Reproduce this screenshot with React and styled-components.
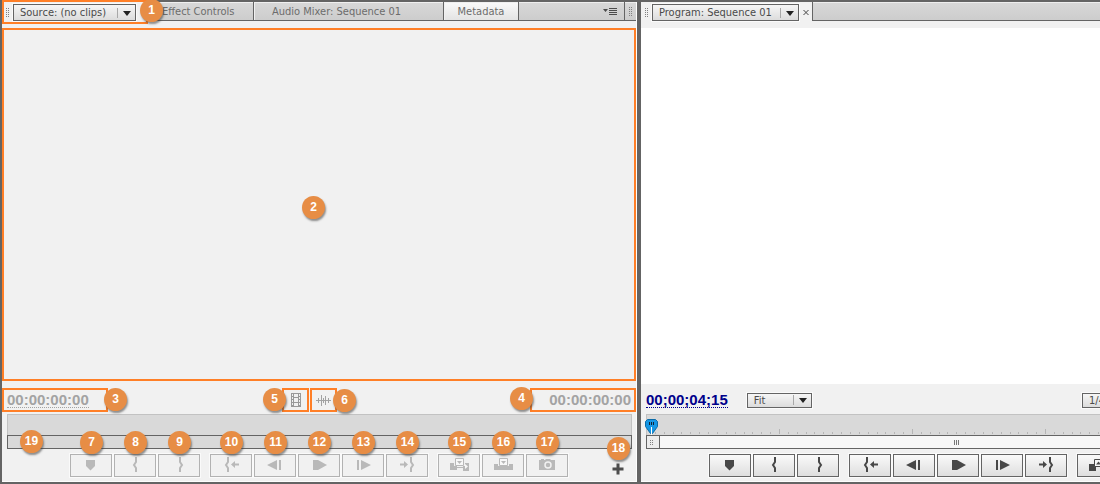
import React from "react";
import styled, { createGlobalStyle } from "styled-components";

const frame = "#646464";
const accent = "#ff7f27";

const GlobalStyle = createGlobalStyle`
  * {
    box-sizing: border-box;
  }

  body {
    margin: 0;
    background: ${frame};
    font-family: "DejaVu Sans Condensed", "DejaVu Sans", Tahoma, sans-serif;
    font-size: 11px;
    color: #4a4a4a;
  }

  button, select {
    font: inherit;
    color: inherit;
    margin: 0;
  }
`;

const Workspace = styled.main`
  display: grid;
  grid-template-columns: repeat(2, minmax(635px, 1fr));
  gap: 4px;
  height: 100vh;
  padding: 2px 0 2px 2px;
  overflow: hidden;
`;

const Panel = styled.section`
  display: flex;
  flex-direction: column;
  min-height: 0;
  background: #f1f1f1;
  border: 1px solid #fdfdfd;
  border-width: 0 1px 1px 0;
`;

const TabBar = styled.div`
  display: flex;
  flex: none;
  height: 19px;
  background: linear-gradient(#d8d8d8, #cccccc);
  box-shadow: inset 0 1px #eeeeee, inset 0 -1px ${frame};
`;

const ActiveTab = styled.div`
  position: relative;
  display: flex;
  align-items: center;
  gap: 4px;
  padding: 2px 0 0 4px;
  width: ${(p) => p.$width}px;
  background: #f1f1f1;
  border-right: ${(p) => (p.$outlined ? 0 : 1)}px solid ${frame};
`;

const Tab = styled.button`
  padding: 0 0 1px ${(p) => p.$indent || 0}px;
  width: ${(p) => p.$width}px;
  border: 0;
  border-right: 1px solid ${frame};
  background: ${(p) => (p.$lit ? "linear-gradient(#fafafa, #e2e2e2)" : "transparent")};
  box-shadow: inset 0 -1px ${frame}, inset 1px 1px #f0f0f0;
  color: #6c6c6c;
  text-align: ${(p) => (p.$lit ? "center" : "left")};
  white-space: nowrap;
`;

const MenuButton = styled.button`
  display: flex;
  align-items: center;
  margin-left: auto;
  padding: 0 6px 0 0;
  border: 0;
  border-right: 1px solid ${frame};
  background: none;
`;

const GripCell = styled.div`
  display: flex;
  align-items: center;
  padding: 0 4px;
`;

const CloseButton = styled.button`
  display: flex;
  padding: 0;
  border: 0;
  background: none;
`;

const SelectBox = styled.div`
  position: relative;
  flex: none;
  width: ${(p) => p.$width}px;
  height: ${(p) => p.$height || 17}px;

  select {
    appearance: none;
    display: block;
    width: 100%;
    height: 100%;
    padding: 0 0 0 6px;
    border: 1px solid ${frame};
    border-radius: 0;
    background: linear-gradient(#f6f6f6, #dcdcdc);
    box-shadow: 0 0 0 1px #fbfbfb;
  }

  svg {
    position: absolute;
    right: 5px;
    top: 50%;
    margin-top: -6px;
    pointer-events: none;
  }
`;

const Outline = styled.div`
  position: absolute;
  inset: ${(p) => p.$inset || "0"};
  border: 2px solid ${accent};
  pointer-events: none;
`;

const Screen = styled.div`
  position: relative;
  flex: 1;
  min-height: 0;
  margin-top: 7px;
  background: ${(p) => p.$color};
`;

const Badge = styled.span`
  position: absolute;
  z-index: 2;
  left: ${(p) => p.$left || "50%"};
  top: ${(p) => p.$top || "50%"};
  width: 23px;
  height: 23px;
  margin: -11px 0 0 -11px;
  border-radius: 50%;
  background: #e78d45;
  box-shadow: 1px 2px 2px rgba(60, 60, 60, 0.55);
  color: #fff;
  font: bold 12px/23px "Liberation Sans", Arial, sans-serif;
  text-align: center;
`;

const InfoRow = styled.div`
  display: flex;
  flex: none;
  align-items: center;
  height: 24px;
  margin-top: ${(p) => p.$top}px;
  padding: ${(p) => p.$padding || "0"};
`;

const TimeCell = styled.div`
  position: relative;
  display: flex;
  width: 106px;
  height: 24px;
  align-items: center;
  justify-content: ${(p) => (p.$end ? "flex-end" : "flex-start")};
  padding: 0 5px;
`;

const Timecode = styled.span`
  font: bold 15px/15px "Liberation Sans", Arial, sans-serif;
  color: ${(p) => (p.$live ? "#00008b" : "#a3a3a3")};
  border-bottom: 1px dotted ${(p) => (p.$plain ? "transparent" : "currentColor")};
`;

const ProgramSelects = styled.div`
  display: flex;
  flex: 1;
  justify-content: space-between;
  padding-left: 19px;
`;

const DragIcons = styled.div`
  display: flex;
  flex: 1;
  justify-content: center;
  gap: 1px;
  padding-right: 19px;
`;

const DragButton = styled.button`
  position: relative;
  display: flex;
  align-items: center;
  justify-content: center;
  width: 27px;
  height: 24px;
  padding: 0;
  border: 2px solid ${accent};
  background: none;
`;

const Timeline = styled.div`
  position: relative;
  flex: none;
  margin: 2px 4px 0 5px;
`;

const Ruler = styled.div`
  height: 21px;
  background: #d9d9d9;
  border: 1px solid #c2c2c2;
  border-bottom: 0;

  svg {
    display: block;
  }
`;

const ScrollTrack = styled.div`
  display: flex;
  height: 14px;
  border: 1px solid ${frame};
  background: ${(p) => (p.$empty ? "#d9d9d9" : "#f7f7f7")};
`;

const ScrollHandle = styled.div`
  display: flex;
  align-items: center;
  justify-content: center;
  width: 13px;
  padding-right: 3px;
  background: #ececec;
  border: 0 solid ${frame};
  border-right-width: ${(p) => (p.$end ? 0 : 1)}px;
  border-left-width: ${(p) => (p.$end ? 1 : 0)}px;
`;

const ScrollThumb = styled.div`
  display: flex;
  flex: 1;
  align-items: center;
  justify-content: center;
  padding-right: 5px;
`;

const Playhead = styled.svg`
  position: absolute;
  left: -1px;
  top: 5px;
`;

const Transport = styled.div`
  position: relative;
  display: flex;
  flex: none;
  justify-content: center;
  gap: 10px;
  margin: 5px 0 4px;
  height: 23px;
`;

const ButtonGroup = styled.div`
  display: flex;
  gap: 2px;
`;

const ButtonSlot = styled.div`
  position: relative;
`;

const TransportButton = styled.button`
  display: block;
  width: 42px;
  height: 23px;
  padding: 0;
  border: 1px solid ${frame};
  background: linear-gradient(#fafafa, #dedede);
  box-shadow: 0 0 0 1px #fafafa;
  color: #484848;

  svg {
    display: block;
    margin: -1px;
  }

  &:disabled {
    border-color: #b2b2b2;
    background: #f1f1f1;
    color: #b9b9b9;
  }
`;

const AddSlot = styled.div`
  position: absolute;
  right: 12px;
  top: 9px;

  button {
    display: block;
    padding: 0;
    border: 0;
    background: none;
  }

  svg {
    display: block;
  }
`;

const Grip = ({ rows = 5 }) => (
  <svg width="3" height={rows * 2 - 1} fill="#808080" shapeRendering="crispEdges">
    {Array.from({ length: rows }, (_, i) => (
      <path key={i} d={`M0 ${i * 2}h1v1H0zM2 ${i * 2}h1v1H2z`} />
    ))}
  </svg>
);

const Dropdown = ({ label, value, width, height }) => (
  <SelectBox $width={width} $height={height}>
    <select aria-label={label} defaultValue={value}>
      <option>{value}</option>
    </select>
    <svg width="16" height="12">
      <path d="M2.5 1v10" stroke="#a8a8a8" />
      <path d="M8 4h8l-4 5z" fill="#222" />
    </svg>
  </SelectBox>
);

const glyphs = {
  marker: <path d="M16 6h9v6l-4.5 4.5L16 12z" />,
  in: <path d="M22 3v5l-2 3 2 3v4" fill="none" stroke="currentColor" strokeWidth="2" />,
  out: <path d="M22 3v5l2 3-2 3v4" fill="none" stroke="currentColor" strokeWidth="2" />,
  goIn: (
    <>
      <path d="M18 3v5l-2 3 2 3v4" fill="none" stroke="currentColor" strokeWidth="2" />
      <path d="M21 10.5L25 7v2.500h4v2h-4V14z" />
    </>
  ),
  back: <path d="M13 11l10-5v10zM25 6h2v10h-2z" />,
  play: <path d="M15 6h5l9 5-9 5h-5z" />,
  forward: <path d="M15 6h2v10h-2zM19 6l10 5-10 5z" />,
  goOut: (
    <>
      <path d="M25 3v5l2 3-2 3v4" fill="none" stroke="currentColor" strokeWidth="2" />
      <path d="M22 10.5L18 7v2.500h-4v2h4V14z" />
    </>
  ),
  insert: (
    <>
      <path d="M12 9h7v7h-7zM25 9h6v8h-6zM19 13h6v1h-6z" />
      <path d="M16 3h11v9H16z" fill="#f1f1f1" />
      <path d="M17.500 4.500h8v7h-8z" fill="#f8f8f8" stroke="currentColor" />
      <path d="M19 7h5l-2.500 3z" />
      <path d="M27 10l3 2.500-3 2.500z" fill="#f8f8f8" />
    </>
  ),
  overwrite: (
    <>
      <path d="M12 10h19v6H12z" />
      <path d="M16 3h11v9H16z" fill="#f1f1f1" />
      <path d="M17.500 4.500h8v7h-8z" fill="#f8f8f8" stroke="currentColor" />
      <path d="M19 7h5l-2.500 3z" />
    </>
  ),
  camera: (
    <>
      <path d="M13 6h2V5h3v1h1l1-1h4l1 1h4v10H13z" />
      <circle cx="22" cy="11" r="3" fill="none" stroke="#f1f1f1" strokeWidth="1.5" />
    </>
  ),
  lift: (
    <>
      <path d="M12 10h7v7h-7zM24 10h7v7h-7z" />
      <path d="M17.500 5.500h8v7h-8z" fill="#f8f8f8" stroke="currentColor" />
      <path d="M19 10.500h5l-2.500-3z" />
    </>
  ),
};

const sourceButtons = [
  [["Add Marker", "marker", 7], ["Mark In", "in", 8], ["Mark Out", "out", 9]],
  [
    ["Go to In", "goIn", 10],
    ["Step Back", "back", 11],
    ["Play", "play", 12],
    ["Step Forward", "forward", 13],
    ["Go to Out", "goOut", 14],
  ],
  [["Insert", "insert", 15], ["Overwrite", "overwrite", 16], ["Export Frame", "camera", 17]],
];

const programButtons = [
  [["Add Marker", "marker"], ["Mark In", "in"], ["Mark Out", "out"]],
  [
    ["Go to In", "goIn"],
    ["Step Back", "back"],
    ["Play", "play"],
    ["Step Forward", "forward"],
    ["Go to Out", "goOut"],
  ],
  [["Lift", "lift"], ["Extract", "lift"], ["Export Frame", "camera"]],
];

const Controls = ({ groups, disabled, children }) => (
  <Transport>
    {groups.map((group, i) => (
      <ButtonGroup key={i}>
        {group.map(([label, glyph, number]) => (
          <ButtonSlot key={label}>
            <TransportButton aria-label={label} disabled={disabled}>
              <svg width="42" height="23" fill="currentColor">
                {glyphs[glyph]}
              </svg>
            </TransportButton>
            {number && <Badge $top="-12px">{number}</Badge>}
          </ButtonSlot>
        ))}
      </ButtonGroup>
    ))}
    {children}
  </Transport>
);

// 15 divisions between two tall ticks
const Ticks = () => (
  <svg width="100%" height="20" stroke="#b5b5b5">
    {Array.from({ length: 70 }, (_, i) => {
      const x = Math.round((i * 133) / 15) - 0.5;
      return <path key={i} d={`M${x} ${i % 15 ? 17 : 14}V19`} />;
    })}
  </svg>
);

const SourcePanel = () => (
  <Panel>
    <TabBar>
      <ActiveTab $width={146} $outlined>
        <Grip />
        <Dropdown label="Source" value="Source: (no clips)" width={123} />
        <Outline $inset="-2px 0 -3px 0" />
        <Badge $left="149px" $top="8px">1</Badge>
      </ActiveTab>
      <Tab $width={106} $indent={14}>Effect Controls</Tab>
      <Tab $width={190} $indent={18}>Audio Mixer: Sequence 01</Tab>
      <Tab $width={75} $lit>Metadata</Tab>
      <MenuButton aria-label="Panel menu">
        <svg width="15" height="9" fill="#4c4c4c">
          <path d="M0 2h5L2.500 5zM6 1h8v1H6zM6 3h8v1H6zM6 5h8v1H6zM6 7h8v1H6z" />
        </svg>
      </MenuButton>
      <GripCell>
        <Grip />
      </GripCell>
    </TabBar>
    <Screen $color="#f1f1f1">
      <Outline />
      <Badge $left="311px" $top="179px">2</Badge>
    </Screen>
    <InfoRow $top={7}>
      <TimeCell>
        <Outline />
        <Timecode>00:00:00:00</Timecode>
        <Badge $left="113px" $top="11px">3</Badge>
      </TimeCell>
      <DragIcons>
        <DragButton aria-label="Drag video only">
          <svg width="10" height="14" fill="#999" shapeRendering="crispEdges">
            <path d="M0 0h10v14H0z" />
            <path
              d="M1 1h1v2H1zM1 4h1v2H1zM1 7h1v2H1zM1 10h1v2H1zM8 1h1v2H8zM8 4h1v2H8zM8 7h1v2H8zM8 10h1v2H8zM3 1h4v3H3zM3 5h4v4H3zM3 10h4v3H3z"
              fill="#f1f1f1"
            />
          </svg>
          <Badge $left="-10px" $top="9px">5</Badge>
        </DragButton>
        <DragButton aria-label="Drag audio only">
          <svg width="15" height="13" stroke="#a2a2a2">
            <path d="M0 6.500h15M2.500 4v5M5.500 1v11M7.500 4v5M9.500 2v9M12.500 4v5" />
          </svg>
          <Badge $left="32px" $top="10px">6</Badge>
        </DragButton>
      </DragIcons>
      <TimeCell $end>
        <Outline />
        <Timecode $plain>00:00:00:00</Timecode>
        <Badge $left="-9px" $top="10px">4</Badge>
      </TimeCell>
    </InfoRow>
    <Timeline>
      <Ruler />
      <ScrollTrack $empty />
      <Badge $left="24px" $top="27px">19</Badge>
    </Timeline>
    <Controls groups={sourceButtons} disabled>
      <AddSlot>
        <button aria-label="Button editor">
          <svg width="12" height="12" fill="#4d4d4d">
            <path d="M4.500 0.500h3v4h4v3h-4v4h-3v-4h-4v-3h4z" />
          </svg>
        </button>
        <Badge $top="-15px">18</Badge>
      </AddSlot>
    </Controls>
  </Panel>
);

const ProgramPanel = () => (
  <Panel>
    <TabBar>
      <ActiveTab $width={172}>
        <Grip />
        <Dropdown label="Program" value="Program: Sequence 01" width={147} />
        <CloseButton aria-label="Close">
          <svg width="6" height="7" stroke="#444">
            <path d="M0.500 1l5 5M5.500 1l-5 5" />
          </svg>
        </CloseButton>
      </ActiveTab>
    </TabBar>
    <Screen $color="#fff" />
    <InfoRow $top={4} $padding="0 128px 0 5px">
      <Timecode $live>00;00;04;15</Timecode>
      <ProgramSelects>
        <Dropdown label="Zoom" value="Fit" width={65} height={15} />
        <Dropdown label="Resolution" value="1/4" width={65} height={15} />
      </ProgramSelects>
    </InfoRow>
    <Timeline>
      <Ruler>
        <Ticks />
      </Ruler>
      <ScrollTrack>
        <ScrollHandle>
          <Grip rows={3} />
        </ScrollHandle>
        <ScrollThumb>
          <svg width="5" height="5" fill="#777" shapeRendering="crispEdges">
            <path d="M0 0h1v5H0zM2 0h1v5H2zM4 0h1v5H4z" />
          </svg>
        </ScrollThumb>
        <ScrollHandle $end>
          <Grip rows={3} />
        </ScrollHandle>
      </ScrollTrack>
      <Playhead width="13" height="16">
        <path d="M2.500 0.500h8l2 2v5l-5 7h-2l-5-7v-5z" fill="#1496e4" stroke="#0b6ba8" />
        <path d="M4.500 3v3M6.500 3v3M8.500 3v3" stroke="#123" />
        <path d="M6.500 8v8" stroke="#fff" />
      </Playhead>
    </Timeline>
    <Controls groups={programButtons} />
  </Panel>
);

const App = () => (
  <>
    <GlobalStyle />
    <Workspace>
      <SourcePanel />
      <ProgramPanel />
    </Workspace>
  </>
);

export default App;
